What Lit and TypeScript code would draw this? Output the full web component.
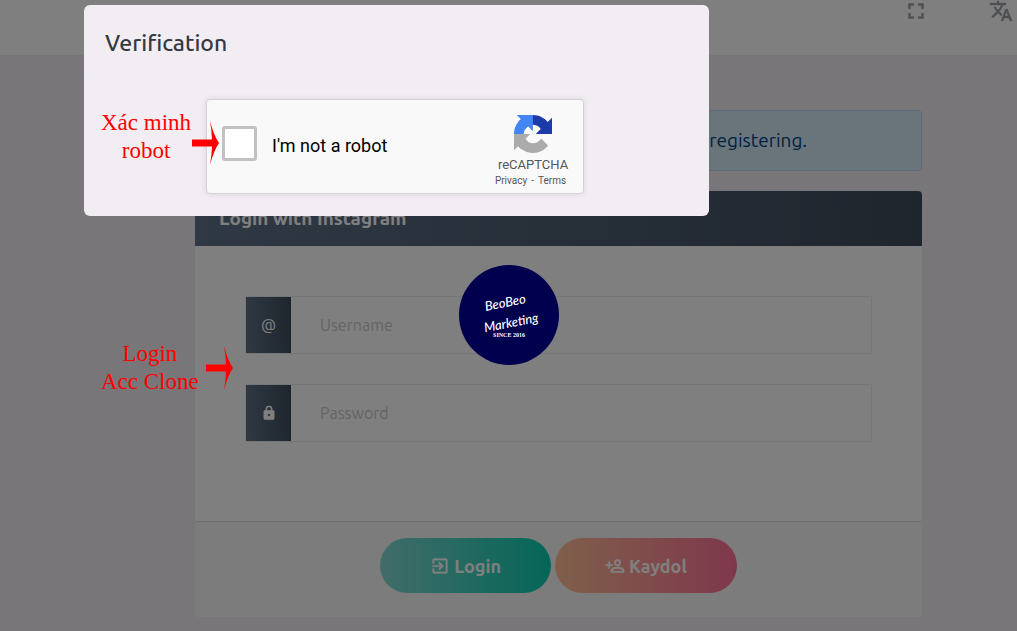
import { LitElement, html, css, svg } from "lit";
import { customElement } from "lit/decorators.js";

const ICONS: Record<string, string> = {
  fullscreen:
    "M5,5H10V7H7V10H5V5M14,5H19V10H17V7H14V5M17,14H19V19H14V17H17V14M10,17V19H5V14H7V17H10Z",
  translate:
    "M12.87,15.07L10.33,12.56L10.36,12.53C12.1,10.59 13.34,8.36 14.07,6H17V4H10V2H8V4H1V6H12.17C11.5,7.92 10.44,9.75 9,11.35C8.07,10.32 7.3,9.19 6.69,8H4.69C5.42,9.63 6.42,11.17 7.67,12.56L2.58,17.58L4,19L9,14L12.11,17.11L12.87,15.07M18.5,10H16.5L12,22H14L15.12,19H19.87L21,22H23L18.5,10M15.88,17L17.5,12.67L19.12,17H15.88Z",
  lock:
    "M12,17A2,2 0 0,0 14,15C14,13.89 13.1,13 12,13A2,2 0 0,0 10,15A2,2 0 0,0 12,17M18,8A2,2 0 0,1 20,10V20A2,2 0 0,1 18,22H6A2,2 0 0,1 4,20V10C4,8.89 4.9,8 6,8H7V6A5,5 0 0,1 12,1A5,5 0 0,1 17,6V8H18M12,3A3,3 0 0,0 9,6V8H15V6A3,3 0 0,0 12,3Z",
  enter:
    "M19,3H5C3.89,3 3,3.89 3,5V9H5V5H19V19H5V15H3V19A2,2 0 0,0 5,21H19A2,2 0 0,0 21,19V5C21,3.89 20.1,3 19,3M10.08,15.58L11.5,17L16.5,12L11.5,7L10.08,8.41L12.67,11H3V13H12.67L10.08,15.58Z",
  accountPlus:
    "M15,4A4,4 0 0,0 11,8A4,4 0 0,0 15,12A4,4 0 0,0 19,8A4,4 0 0,0 15,4M15,5.9C16.16,5.9 17.1,6.84 17.1,8C17.1,9.16 16.16,10.1 15,10.1A2.1,2.1 0 0,1 12.9,8A2.1,2.1 0 0,1 15,5.9M4,7V10H1V12H4V15H6V12H9V10H6V7H4M15,13C12.33,13 7,14.33 7,17V20H23V17C23,14.33 17.67,13 15,13M15,14.9C17.97,14.9 21.1,16.36 21.1,17V18.1H8.9V17C8.9,16.36 12,14.9 15,14.9Z",
};

const icon = (name: string, size: number) => html`<svg
  class="icon" width=${size} height=${size} viewBox="0 0 24 24" aria-hidden="true"
>${svg`<path d=${ICONS[name]} fill="currentColor" stroke="currentColor" stroke-width="0.4"/>`}</svg>`;

const arrow = html`<svg class="arrow" width="27" height="44" viewBox="0 0 27 44" aria-hidden="true">
  <path d="M0 18.5H20Q19.500 8 18 0Q22 15 27 22Q22 29 18 44Q19.500 36 20 25.500H0Z" fill="#f00"/>
</svg>`;

@customElement("captcha-box")
export class CaptchaBox extends LitElement {
  static styles = css`
    :host {
      display: flex;
      box-sizing: border-box;
      width: 378px;
      height: 95px;
      max-width: 100%;
      padding: 0 15px;
      align-items: center;
      justify-content: space-between;
      border: 1px solid #d3d3d3;
      border-radius: 4px;
      background: #f9f9f9;
      box-shadow: 0 0 5px 1px rgba(0, 0, 0, 0.08);
      font-family: Roboto, sans-serif;
      color: #555;
    }
    .check { display: flex; align-items: center; gap: 15px; margin-top: -6px; }
    .box {
      appearance: none;
      box-sizing: border-box;
      width: 35px;
      height: 35px;
      margin: 0;
      border: 3px solid #c1c1c1;
      border-radius: 3px;
      background: #fff;
    }
    .label { font-size: 18px; line-height: 22px; color: #000; padding-top: 4px; }
    .brand { display: flex; flex-direction: column; align-items: center; width: 70px; padding-top: 10px; }
    .name { font-size: 13px; line-height: 16px; margin-top: 4px; }
    .links { display: flex; gap: 4px; margin-right: 5px; font-size: 10px; line-height: 16px; white-space: nowrap; }
    .links a { color: inherit; text-decoration: none; }
  `;
  render() {
    return html`
      <div class="check">
        <input class="box" type="checkbox" id="robot" />
        <label class="label" for="robot">I'm not a robot</label>
      </div>
      <div class="brand">
        <svg width="38" height="38" viewBox="0 0 64 64" aria-hidden="true">
          <path fill="#1c3aa9" d="M64 31.955l-.033-1.370V4.687l-7.160 7.160C50.948 4.674 42.033.093 32.050.093c-10.400 0-19.622 4.960-25.458 12.640l11.736 11.860a15.550 15.550 0 0 1 4.754-5.334c2.050-1.600 4.952-2.906 8.968-2.906.485 0 .860.057 1.135.163 4.976.393 9.288 3.140 11.828 7.124l-8.307 8.307L64 31.953"/>
          <path fill="#4285f4" d="M31.862.094l-1.370.033H4.594l7.160 7.160C4.580 13.147 0 22.060 0 32.046c0 10.400 4.960 19.622 12.640 25.458L24.500 45.768a15.550 15.550 0 0 1-5.334-4.754c-1.600-2.050-2.906-4.952-2.906-8.968 0-.485.057-.860.163-1.135.393-4.976 3.140-9.288 7.124-11.828l8.307 8.307L31.860.095"/>
          <path fill="#ababab" d="M.001 32.045l.033 1.370v25.898l7.160-7.160c5.860 7.173 14.774 11.754 24.760 11.754 10.400 0 19.622-4.960 25.458-12.640l-11.736-11.860a15.550 15.550 0 0 1-4.754 5.334c-2.050 1.600-4.952 2.906-8.968 2.906-.485 0-.860-.057-1.135-.163-4.976-.393-9.288-3.140-11.828-7.124l8.307-8.307c-10.522.040-22.400.066-27.295-.005"/>
        </svg>
        <span class="name">reCAPTCHA</span>
        <span class="links"><a href="#">Privacy</a><span>-</span><a href="#">Terms</a></span>
      </div>
    `;
  }
}

@customElement("app-root")
export class AppRoot extends LitElement {
  static styles = css`
    :host {
      display: block;
      position: relative;
      min-height: 100vh;
      overflow: hidden;
      background: #f2edf3;
      font-family: Ubuntu, "Noto Sans", sans-serif;
      color: #343a40;
    }
    .icon { display: block; flex: none; }
    .topbar {
      display: flex;
      justify-content: flex-end;
      align-items: flex-start;
      height: 55px;
      background: #fff;
    }
    .tools { display: flex; align-items: center; gap: 60px; height: 22px; padding-right: 4px; }
    .tool { display: block; border: 0; padding: 0; background: none; color: #9c9fa6; }
    .content { padding: 55px 95px 14px 195px; }
    .notice {
      box-sizing: border-box;
      padding: 16px 114px 16px 20px;
      border: 1px solid #b8daf0;
      border-radius: 4px;
      background: #d2e9f7;
      color: #004085;
      font-size: 19px;
      line-height: 27px;
      text-align: right;
    }
    .card { margin-top: 20px; border-radius: 4px; overflow: hidden; background: #fff; }
    .card-header {
      margin: 0;
      padding: 13px 24px 14px;
      background: linear-gradient(89deg, #5e7188, #3e4b5b);
      color: #fff;
      font-size: 19px;
      line-height: 28px;
      font-weight: 700;
    }
    .fields { display: grid; gap: 30px; padding: 50px 50px 79px; }
    .field { display: flex; height: 58px; box-sizing: border-box; border: 1px solid #ebedf2; border-radius: 2px; }
    .addon {
      display: flex;
      align-items: center;
      justify-content: center;
      width: 45px;
      flex: none;
      background: linear-gradient(89deg, #5e7188, #3e4b5b);
      color: #fff;
      font-size: 16px;
    }
    .input {
      flex: 1;
      min-width: 0;
      padding: 0 29px;
      border: 0;
      outline: 0;
      background: none;
      font: inherit;
      font-size: 16px;
    }
    .input::placeholder { color: #c9c8c8; opacity: 1; }
    .card-footer {
      display: flex;
      justify-content: center;
      gap: 4px;
      padding: 16px 24px 24px;
      border-top: 1px solid #dfdfdf;
      background: #f8f8f8;
    }
    .btn {
      display: flex;
      align-items: center;
      justify-content: center;
      gap: 4px;
      height: 55px;
      padding: 0 50px;
      border: 0;
      border-radius: 28px;
      color: #fff;
      font-family: inherit;
      font-size: 18px;
      font-weight: 700;
    }
    .login { background: linear-gradient(to right, #84d9d2, #07cdae); }
    .signup { background: linear-gradient(to right, #ffbf96, #fe7096); }
    .backdrop { position: absolute; inset: 0; background: rgba(0, 0, 0, 0.5); }
    .modal {
      position: absolute;
      top: 5px;
      left: 84px;
      width: 625px;
      border-radius: 6px;
      background: #f2edf3;
    }
    .modal-header { padding: 24px 21px 22px; border-bottom: 1px solid #ebedf2; }
    .modal-title { margin: 0; font-size: 23px; line-height: 28px; font-weight: 500; }
    .modal-body { display: flex; justify-content: center; padding: 19px 3px 22px 0; }
    .logo { position: absolute; top: 265px; left: 459px; }
    .note {
      position: absolute;
      display: flex;
      align-items: center;
      color: #f00;
      font-family: "Liberation Serif", serif;
      font-size: 23px;
      line-height: 28px;
      text-align: center;
      white-space: nowrap;
    }
    .note-captcha { top: 109px; left: 101px; gap: 1px; }
    .note-captcha .arrow { margin-top: 12px; }
    .note-login { top: 340px; left: 101px; gap: 7px; }
    .arrow { display: block; }
  `;
  render() {
    return html`
      <header class="topbar">
        <div class="tools">
          <button class="tool" aria-label="Fullscreen">${icon("fullscreen", 26)}</button>
          <button class="tool" aria-label="Language">${icon("translate", 24)}</button>
        </div>
      </header>
      <main class="content">
        <div class="notice">registering.</div>
        <form class="card">
          <h4 class="card-header">Login with Instagram</h4>
          <div class="fields">
            <div class="field">
              <label class="addon" for="user">@</label>
              <input class="input" id="user" type="text" placeholder="Username" />
            </div>
            <div class="field">
              <label class="addon" for="pass" aria-label="Password">${icon("lock", 16)}</label>
              <input class="input" id="pass" type="password" placeholder="Password" />
            </div>
          </div>
          <div class="card-footer">
            <button class="btn login" type="button">${icon("enter", 20)}Login</button>
            <button class="btn signup" type="button">${icon("accountPlus", 20)}Kaydol</button>
          </div>
        </form>
      </main>
      <div class="backdrop"></div>
      <section class="modal" role="dialog" aria-label="Verification">
        <div class="modal-header"><h5 class="modal-title">Verification</h5></div>
        <div class="modal-body"><captcha-box></captcha-box></div>
      </section>
      <svg class="logo" width="100" height="100" viewBox="0 0 100 100">
        <circle cx="50" cy="50" r="50" fill="#00004f"/>
        <g fill="#fff" text-anchor="middle">
          <g font-family="Lato, cursive" font-style="italic" font-weight="500">
            <text x="47" y="42" font-size="13" transform="rotate(-11 47 42)">BeoBeo</text>
            <text x="53" y="62" font-size="13" transform="rotate(-11 53 62)">Marketing</text>
          </g>
          <text x="50" y="72" font-family="Liberation Serif, serif" font-size="6" font-weight="700">SINCE 2016</text>
        </g>
      </svg>
      <div class="note note-captcha"><span>Xác minh<br />robot</span>${arrow}</div>
      <div class="note note-login"><span>Login<br />Acc Clone</span>${arrow}</div>
    `;
  }
}
